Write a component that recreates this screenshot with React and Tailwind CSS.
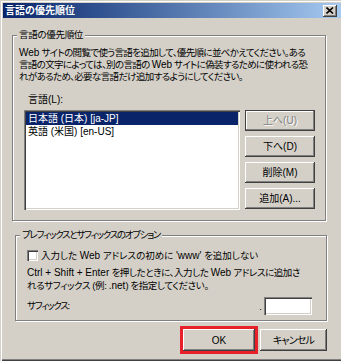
export default function App() {
  const bevel =
    "bg-[#d4d0c8] shadow-[inset_-1px_-1px_0_#404040,inset_1px_1px_0_#fff,inset_-2px_-2px_0_#808080]";
  const group =
    "relative border border-[#808080] shadow-[inset_1px_1px_0_#fff,1px_1px_0_#fff]";
  const sunken =
    "bg-white shadow-[inset_1px_1px_0_#808080,inset_2px_2px_0_#404040,inset_-1px_-1px_0_#fff,inset_-2px_-2px_0_#d4d0c8]";
  const L = ({ children }) => (
    <span className="text-[10px] tracking-normal">{children}</span>
  );
  return (
    <div className="w-[341px] h-[361px] bg-[#d4d0c8] flex flex-col overflow-hidden text-black text-[9.5px] font-['Liberation_Sans','Noto_Sans_CJK_JP',sans-serif] [font-feature-settings:'palt'] shadow-[inset_1px_1px_0_#d4d0c8,inset_2px_2px_0_#fff,inset_0_-1px_0_#404040,inset_0_-2px_0_#808080]">
      {/* Title bar */}
      <div className="mt-[3px] ml-[3px] h-[15px] flex items-center justify-between bg-linear-to-r from-[#0a246a] to-[#a6caf0] pl-[2px] pr-[4px]">
        <span className="text-white font-bold text-[10px] leading-none [font-feature-settings:normal]">
          言語の優先順位
        </span>
        <div className={`w-[14px] h-[12px] flex items-center justify-center ${bevel}`}>
          <svg width="8" height="7" viewBox="0 0 8 7">
            <path d="M0.5 0.5 L7 6.5 M7 0.5 L0.5 6.5" stroke="#000" strokeWidth="1.6" />
          </svg>
        </div>
      </div>

      {/* Group 1 */}
      <div className={`ml-[12px] mt-[17px] w-[314px] h-[186px] ${group}`}>
        <span className="absolute left-[4px] -top-[7px] px-[2px] bg-[#d4d0c8] leading-[12px] tracking-[-0.3px]">
          言語の優先順位
        </span>
        <div className="flex flex-col pl-[6px] pt-[11px]">
          <p className="leading-[12px] whitespace-nowrap tracking-[-0.65px]">
            <L>Web</L> サイトの閲覧で使う言語を追加して、優先順に並べかえてください。ある
            <br />
            言語の文字によっては、別の言語の <L>Web</L> サイトに偽装するために使われる恐
            <br />
            れがあるため、必要な言語だけ追加するようにしてください。
          </p>
          <div className="mt-[11px] ml-[9px] leading-[12px] text-[10px]">言語(L):</div>
          <div className="mt-[4px] ml-[5px] flex">
            <div className={`w-[216px] h-[100px] p-[2px] flex flex-col text-[10px] ${sunken}`}>
              <div className="h-[13px] leading-[13px] pl-[2px] bg-[#0a246a] text-white whitespace-nowrap">
                日本語 (日本) [ja-JP]
              </div>
              <div className="h-[13px] leading-[13px] pl-[2px] whitespace-nowrap">
                英語 (米国) [en-US]
              </div>
            </div>
            <div className="ml-[5px] w-[70px] flex flex-col gap-[5px] text-[10px]">
              <div className="h-[21px] border border-[#404040] bg-[#d4d0c8] shadow-[inset_-1px_-1px_0_#808080,inset_1px_1px_0_#fff] flex items-center justify-center text-[#808080] [text-shadow:1px_1px_0_#fff]">
                上へ(U)
              </div>
              <div className={`h-[21px] flex items-center justify-center ${bevel}`}>下へ(D)</div>
              <div className={`h-[21px] flex items-center justify-center ${bevel}`}>削除(M)</div>
              <div className={`h-[21px] flex items-center justify-center ${bevel}`}>追加(A)...</div>
            </div>
          </div>
        </div>
      </div>

      {/* Group 2 */}
      <div className={`ml-[15px] mt-[14px] w-[312px] h-[86px] ${group}`}>
        <span className="absolute left-[4px] -top-[7px] px-[2px] bg-[#d4d0c8] leading-[12px] whitespace-nowrap tracking-[-1.3px]">
          プレフィックスとサフィックスのオプション
        </span>
        <div className="flex flex-col pl-[11px] pt-[14px]">
          <div className="flex items-center h-[11px] gap-[3px]">
            <div className={`w-[11px] h-[11px] ${sunken}`} />
            <span className="leading-[12px] whitespace-nowrap">
              入力した <L>Web</L> アドレスの初めに <L>'www'</L> を追加しない
            </span>
          </div>
          <p className="mt-[5px] leading-[13px] whitespace-nowrap tracking-[-0.4px]">
            <L>Ctrl + Shift + Enter</L> を押したときに、入力した <L>Web</L> アドレスに追加さ
            <br />
            れるサフィックス (例: <L>.net</L>) を指定してください。
          </p>
          <div className="mt-[5px] mr-[14px] flex items-center h-[18px]">
            <span className="leading-[12px] tracking-[-1.3px]">サフィックス:</span>
            <span className="ml-auto mr-[2px] leading-[12px] self-end mb-[2px]">.</span>
            <div className={`w-[48px] h-[18px] ${sunken}`} />
          </div>
        </div>
      </div>

      {/* Bottom buttons */}
      <div className="mt-[5px] pr-[14px] flex justify-end items-center text-[10px]">
        <div className="border-[3px] border-[#e8202a]">
          <div className={`w-[72px] h-[22px] flex items-center justify-center ${bevel}`}>OK</div>
        </div>
        <div className={`ml-[2px] w-[67px] h-[22px] flex items-center justify-center tracking-[-0.8px] ${bevel}`}>
          キャンセル
        </div>
      </div>
    </div>
  );
}
